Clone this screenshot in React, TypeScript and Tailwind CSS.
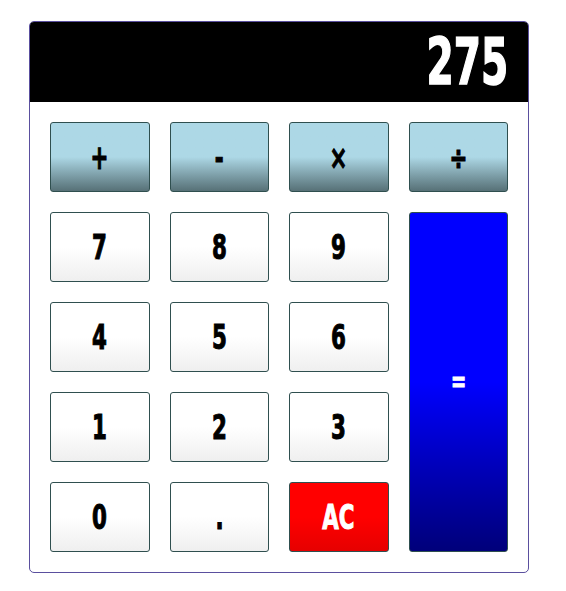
const font = "font-['DejaVu_Sans_Condensed','DejaVu_Sans',sans-serif] font-bold";

const numBtn =
  'flex items-center justify-center rounded-[3px] border border-[#2f4f4f] bg-gradient-to-b from-white from-50% to-[#efefef] text-black';
const opBtn =
  'flex items-center justify-center rounded-[3px] border border-[#2f4f4f] bg-gradient-to-b from-[#add8e6] from-50% to-[#577177] text-black';

// condensed glyph, roughly Impact-like
function Glyph({ children }: { children: React.ReactNode }) {
  return (
    <span className="inline-block scale-x-[0.72] [-webkit-text-stroke:1px_currentColor]">{children}</span>
  );
}

export default function App() {
  const digits = ['4', '5', '6', '1', '2', '3'];

  return (
    <div className="min-h-[591px] bg-white pl-[29px] pt-[21px]">
      <div className={`w-[500px] overflow-hidden rounded-[5px] border border-[#5a4f9e] ${font}`}>
        <div className="flex h-[80px] items-center justify-end bg-black pr-[20px] text-[64px] leading-none text-white">
          <span className="inline-block origin-right scale-x-[0.68] [-webkit-text-stroke:1.5px_white]">275</span>
        </div>
        <div className="grid grid-cols-4 grid-rows-[repeat(5,70px)] gap-[20px] p-[20px] text-[33px] leading-none">
          <button className={opBtn}>
            <Glyph>+</Glyph>
          </button>
          <button className={opBtn}>
            <Glyph>-</Glyph>
          </button>
          <button className={opBtn}>
            <Glyph>×</Glyph>
          </button>
          <button className={opBtn}>
            <Glyph>÷</Glyph>
          </button>

          <button className={numBtn}>
            <Glyph>7</Glyph>
          </button>
          <button className={numBtn}>
            <Glyph>8</Glyph>
          </button>
          <button className={numBtn}>
            <Glyph>9</Glyph>
          </button>
          <button className="row-span-4 flex items-center justify-center rounded-[3px] border border-[#2f4f4f] bg-gradient-to-b from-[#0000ff] from-50% to-[#00007a] text-[28px] text-white">
            <Glyph>=</Glyph>
          </button>

          {digits.map((d) => (
            <button key={d} className={numBtn}>
              <Glyph>{d}</Glyph>
            </button>
          ))}

          <button className={numBtn}>
            <Glyph>0</Glyph>
          </button>
          <button className={numBtn}>
            <Glyph>.</Glyph>
          </button>
          <button className="flex items-center justify-center rounded-[3px] border border-[#2f4f4f] bg-gradient-to-b from-[#ff0000] from-50% to-[#e60000] text-white">
            <Glyph>AC</Glyph>
          </button>
        </div>
      </div>
    </div>
  );
}
